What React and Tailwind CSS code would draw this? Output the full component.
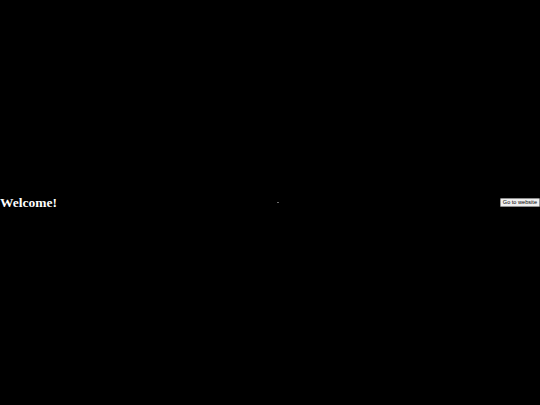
export default function App() {
  return (
    <div className="flex h-screen w-full items-center justify-between bg-black">
      <h1
        className="text-[13.5px] font-bold leading-none text-white"
        style={{ fontFamily: '"Liberation Serif", "Times New Roman", serif' }}
      >
        Welcome!
      </h1>

      <span className="block h-px w-[2px] bg-[#6b6b6b]" />

      <button
        className="h-[9px] rounded-[1px] border border-[#8f8f8f] bg-[#efefef] px-[2px] text-[5.6px] leading-none text-black"
        style={{ fontFamily: '"Liberation Sans", Arial, sans-serif' }}
      >
        Go to website
      </button>
    </div>
  );
}
